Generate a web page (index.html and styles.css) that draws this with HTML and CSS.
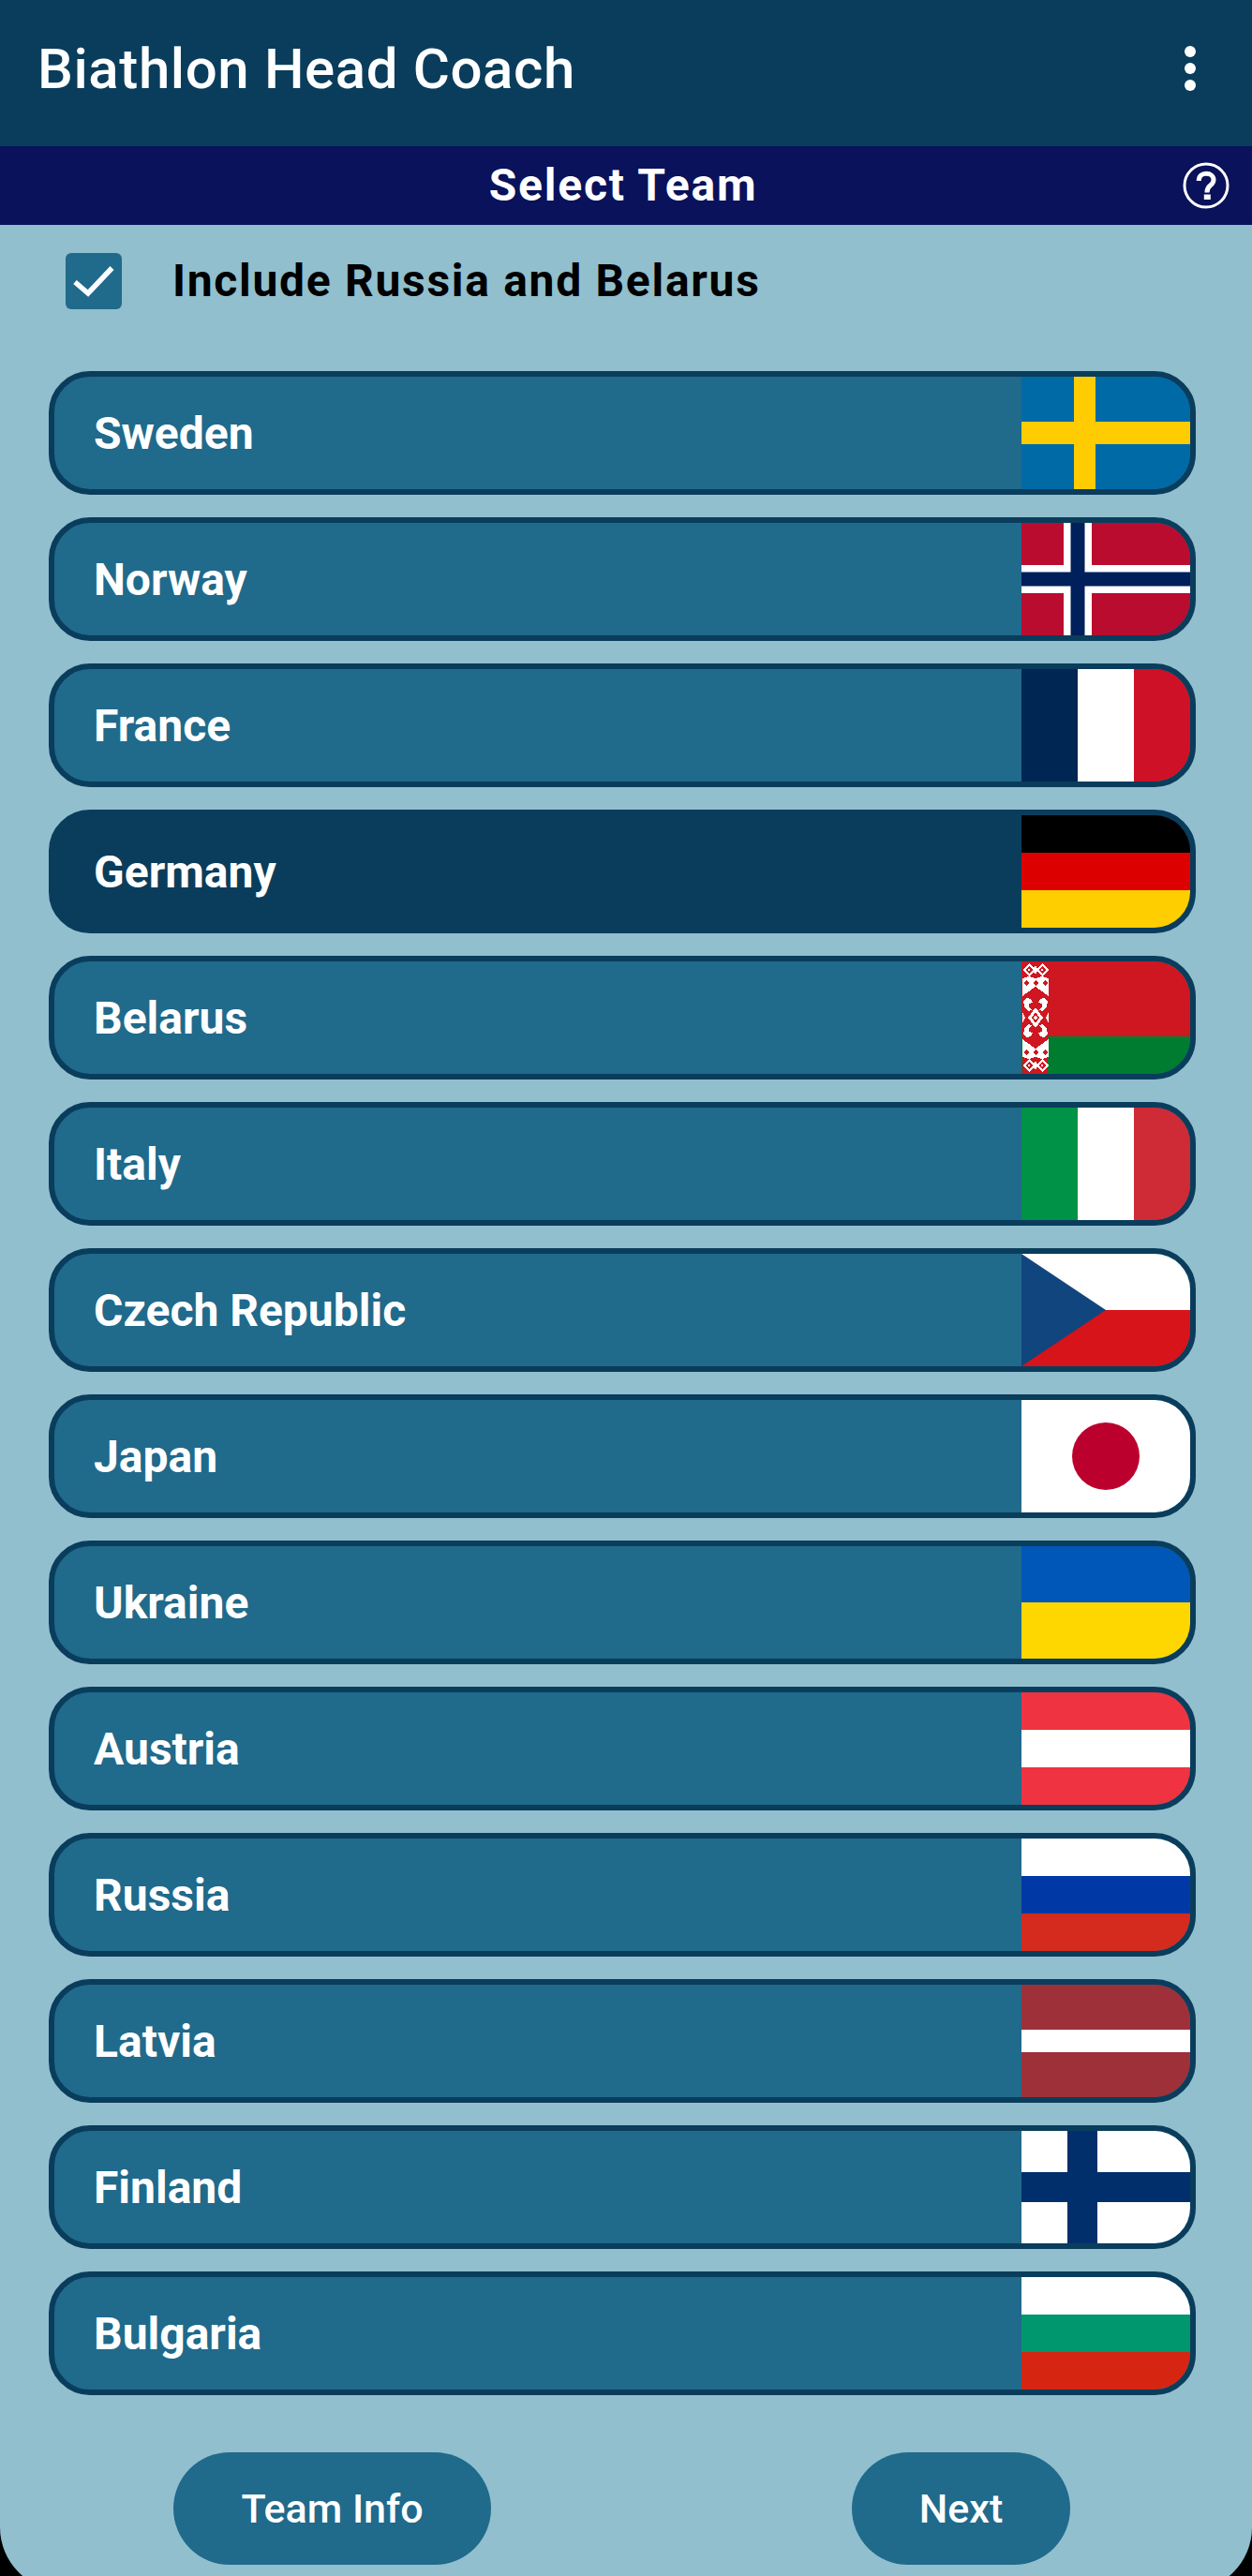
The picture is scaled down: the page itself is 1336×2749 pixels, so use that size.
FILE: index.html
```html
<!DOCTYPE html>
<html lang="en">
<head>
  <meta charset="UTF-8">
  <meta name="viewport" content="width=device-width, initial-scale=1.0">
  <title>Biathlon Head Coach</title>
  <link rel="stylesheet" href="styles.css">
</head>
<body>
  <div class="screen">
    <header class="appbar">
      <h1>Biathlon Head Coach</h1>
      <div class="menu"><span></span><span></span><span></span></div>
    </header>
    <div class="subbar">
      <h2>Select Team</h2>
      <svg class="help" viewBox="0 0 50 50">
        <circle cx="25" cy="25" r="23" fill="none" stroke="#fff" stroke-width="3"/>
        <path d="M17.300 20c0-5.200 3.400-7.800 7.800-7.800 4.600 0 7.900 2.700 7.900 6.800 0 3-1.600 4.500-3.600 6-2.400 1.800-3.400 3.100-3.400 7.500" fill="none" stroke="#fff" stroke-width="5"/>
        <rect x="22.800" y="34.500" width="7" height="5.500" fill="#fff"/>
      </svg>
    </div>

    <label class="include">
      <span class="checkbox">
        <svg viewBox="0 0 60 60"><path d="M10 31l14 12 25.500-27" fill="none" stroke="#fff" stroke-width="5.500"/></svg>
      </span>
      Include Russia and Belarus
    </label>

    <div class="teams">
      <div class="team">
        <span class="name">Sweden</span>
        <svg class="flag" viewBox="0 0 180 120"><rect width="180" height="120" fill="#006aa7"/><rect x="56" width="23" height="120" fill="#fecc00"/><rect y="48" width="180" height="24" fill="#fecc00"/></svg>
      </div>
      <div class="team">
        <span class="name">Norway</span>
        <svg class="flag" viewBox="0 0 180 120"><rect width="180" height="120" fill="#ba0c2f"/><rect x="45" width="30" height="120" fill="#fff"/><rect y="45" width="180" height="30" fill="#fff"/><rect x="52.500" width="15" height="120" fill="#00205b"/><rect y="52.500" width="180" height="15" fill="#00205b"/></svg>
      </div>
      <div class="team">
        <span class="name">France</span>
        <svg class="flag" viewBox="0 0 180 120"><rect width="60" height="120" fill="#002654"/><rect x="60" width="60" height="120" fill="#fff"/><rect x="120" width="60" height="120" fill="#ce1126"/></svg>
      </div>
      <div class="team selected">
        <span class="name">Germany</span>
        <svg class="flag" viewBox="0 0 180 120"><rect width="180" height="40" fill="#000"/><rect y="40" width="180" height="40" fill="#dd0000"/><rect y="80" width="180" height="40" fill="#ffce00"/></svg>
      </div>
      <div class="team">
        <span class="name">Belarus</span>
        <svg class="flag" viewBox="0 0 180 120">
          <defs>
            <g id="by-quarter">
              <polygon points="7,2 14,9 7,16 0,9" fill="#fff"/>
              <polygon points="7,5 11,9 7,13 3,9" fill="#ce1720"/>
              <polygon points="7,7.500 8.500,9 7,10.500 5.500,9" fill="#fff"/>
              <polygon points="14,4 14,14 11,9" fill="#fff"/>
              <polygon points="0,18 7,16 14,18 14,27 0,37" fill="#fff"/>
              <polygon points="4,20 7,23 4,26 1,23" fill="#ce1720"/>
              <polygon points="14,20 14,26 11,23" fill="#ce1720"/>
              <polygon points="1,42 5,39 9,40 11,44 7,45 7,48 10,52 6,53 2,48" fill="#fff"/>
              <polygon points="14,49 6,60 14,60" fill="#fff"/>
              <polygon points="14,54 10,60 14,60" fill="#ce1720"/>
              <polygon points="14,57 12,60 14,60" fill="#fff"/>
              <polygon points="0,54 3,60 0,60" fill="#fff"/>
            </g>
          </defs>
          <rect width="180" height="80" fill="#ce1720"/>
          <rect y="80" width="180" height="40" fill="#007c30"/>
          <rect x="1" width="27" height="120" fill="#ce1720"/>
          <g transform="translate(1 0)" shape-rendering="crispEdges">
            <use href="#by-quarter"/>
            <use href="#by-quarter" transform="matrix(-1 0 0 1 28 0)"/>
            <use href="#by-quarter" transform="matrix(1 0 0 -1 0 120)"/>
            <use href="#by-quarter" transform="matrix(-1 0 0 -1 28 120)"/>
          </g>
        </svg>
      </div>
      <div class="team">
        <span class="name">Italy</span>
        <svg class="flag" viewBox="0 0 180 120"><rect width="60" height="120" fill="#009246"/><rect x="60" width="60" height="120" fill="#fff"/><rect x="120" width="60" height="120" fill="#ce2b37"/></svg>
      </div>
      <div class="team">
        <span class="name">Czech Republic</span>
        <svg class="flag" viewBox="0 0 180 120"><rect width="180" height="60" fill="#fff"/><rect y="60" width="180" height="60" fill="#d7141a"/><polygon points="0,0 90,60 0,120" fill="#11457e"/></svg>
      </div>
      <div class="team">
        <span class="name">Japan</span>
        <svg class="flag" viewBox="0 0 180 120"><rect width="180" height="120" fill="#fff"/><circle cx="90" cy="60" r="36" fill="#bc002d"/></svg>
      </div>
      <div class="team">
        <span class="name">Ukraine</span>
        <svg class="flag" viewBox="0 0 180 120"><rect width="180" height="60" fill="#0057b7"/><rect y="60" width="180" height="60" fill="#ffd700"/></svg>
      </div>
      <div class="team">
        <span class="name">Austria</span>
        <svg class="flag" viewBox="0 0 180 120"><rect width="180" height="120" fill="#ef3340"/><rect y="40" width="180" height="40" fill="#fff"/></svg>
      </div>
      <div class="team">
        <span class="name">Russia</span>
        <svg class="flag" viewBox="0 0 180 120"><rect width="180" height="40" fill="#fff"/><rect y="40" width="180" height="40" fill="#0039a6"/><rect y="80" width="180" height="40" fill="#d52b1e"/></svg>
      </div>
      <div class="team">
        <span class="name">Latvia</span>
        <svg class="flag" viewBox="0 0 180 120"><rect width="180" height="120" fill="#9e3039"/><rect y="48" width="180" height="24" fill="#fff"/></svg>
      </div>
      <div class="team">
        <span class="name">Finland</span>
        <svg class="flag" viewBox="0 0 180 120"><rect width="180" height="120" fill="#fff"/><rect x="49" width="32" height="120" fill="#002f6c"/><rect y="44" width="180" height="32" fill="#002f6c"/></svg>
      </div>
      <div class="team">
        <span class="name">Bulgaria</span>
        <svg class="flag" viewBox="0 0 180 120"><rect width="180" height="40" fill="#fff"/><rect y="40" width="180" height="40" fill="#00966e"/><rect y="80" width="180" height="40" fill="#d62612"/></svg>
      </div>
    </div>

    <div class="actions">
      <button class="team-info">Team Info</button>
      <button class="next">Next</button>
    </div>
  </div>
</body>
</html>
```

FILE: styles.css
```css
html, body {
  margin: 0;
  padding: 0;
  height: 2749px;
  overflow: hidden;
  background-color: #000;
}
.screen {
  height: 2765px;
  background-color: #91bfce;
  border-radius: 0 0 68px 68px;
  overflow: hidden;
  font-family: Roboto, "Liberation Sans", sans-serif;
}
.appbar {
  height: 156px;
  box-sizing: border-box;
  padding: 0 60px 10px 40px;
  background-color: #0a3d5c;
  display: flex;
  align-items: center;
  justify-content: space-between;
}
h1 {
  margin: 0;
  font-size: 60px;
  font-weight: 500;
  letter-spacing: 0.6px;
  color: #fff;
}
.menu {
  display: flex;
  flex-direction: column;
  gap: 6px;
}
.menu span {
  width: 12px;
  height: 12px;
  border-radius: 50%;
  background-color: #fff;
}
.subbar {
  height: 84px;
  box-sizing: border-box;
  padding-bottom: 2px;
  position: relative;
  background-color: #09125a;
  display: flex;
  align-items: center;
  justify-content: center;
}
h2 {
  margin: 0 0 0 -6px;
  font-size: 48px;
  font-weight: 700;
  letter-spacing: 1.800px;
  color: #fff;
}
.help {
  position: absolute;
  right: 24px;
  top: 17px;
  width: 50px;
  height: 50px;
}
.include {
  height: 156px;
  box-sizing: border-box;
  padding: 30px 0 66px 70px;
  display: flex;
  align-items: center;
  gap: 54px;
  font-size: 48px;
  line-height: 56px;
  font-weight: 700;
  letter-spacing: 1.700px;
  color: #000;
}
.checkbox {
  width: 60px;
  height: 60px;
  border-radius: 6px;
  background-color: #206a8c;
}
.checkbox svg {
  display: block;
}
.teams {
  width: 1224px;
  margin-left: 52px;
  display: flex;
  flex-direction: column;
  gap: 24px;
}
.team {
  height: 132px;
  box-sizing: border-box;
  border: 6px solid #0a3d5c;
  border-radius: 44px;
  background-color: #206a8c;
  display: flex;
  align-items: center;
  justify-content: space-between;
  overflow: hidden;
  padding-left: 42px;
}
.team.selected {
  background-color: #0a3d5c;
}
.name {
  font-size: 48px;
  font-weight: 700;
  color: #fff;
}
.flag {
  display: block;
  width: 180px;
  height: 120px;
}
.actions {
  margin-top: 61px;
  padding-left: 185px;
  display: flex;
  gap: 385px;
}
button {
  height: 120px;
  border: none;
  border-radius: 60px;
  background-color: #206a8c;
  color: #fff;
  font-family: Roboto, "Liberation Sans", sans-serif;
  font-size: 43px;
  font-weight: 500;
}
.team-info {
  width: 339px;
}
.next {
  width: 233px;
}
```
